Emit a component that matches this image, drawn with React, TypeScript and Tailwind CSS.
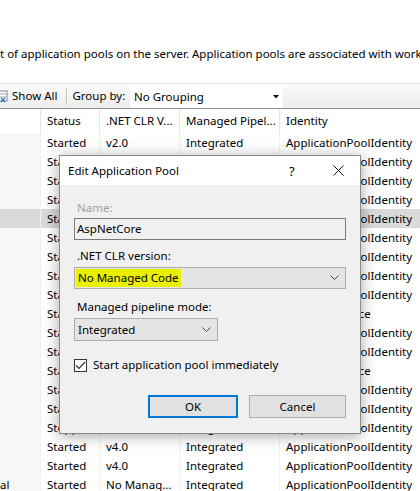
import React from "react";

type Row = { name?: string; status: string; clr: string; pipe: string; id: string };

const rows: Row[] = [
  { status: "Started", clr: "v2.0", pipe: "Integrated", id: "ApplicationPoolIdentity" },
  { status: "Started", clr: "v4.0", pipe: "Integrated", id: "ApplicationPoolIdentity" },
  { status: "Started", clr: "v4.0", pipe: "Integrated", id: "ApplicationPoolIdentity" },
  { status: "Started", clr: "v4.0", pipe: "Integrated", id: "ApplicationPoolIdentity" },
  { status: "Started", clr: "v4.0", pipe: "Integrated", id: "ApplicationPoolIdentity" },
  { status: "Started", clr: "v4.0", pipe: "Integrated", id: "ApplicationPoolIdentity" },
  { status: "Started", clr: "v4.0", pipe: "Integrated", id: "ApplicationPoolIdentity" },
  { status: "Started", clr: "v4.0", pipe: "Integrated", id: "ApplicationPoolIdentity" },
  { status: "Started", clr: "v4.0", pipe: "Integrated", id: "ApplicationPoolIdentity" },
  { status: "Started", clr: "v4.0", pipe: "Integrated", id: "NetworkService" },
  { status: "Started", clr: "v4.0", pipe: "Integrated", id: "ApplicationPoolIdentity" },
  { status: "Started", clr: "v4.0", pipe: "Integrated", id: "ApplicationPoolIdentity" },
  { status: "Started", clr: "v4.0", pipe: "Integrated", id: "NetworkService" },
  { status: "Started", clr: "v4.0", pipe: "Integrated", id: "ApplicationPoolIdentity" },
  { status: "Started", clr: "v4.0", pipe: "Integrated", id: "ApplicationPoolIdentity" },
  { status: "Stopped", clr: "v4.0", pipe: "Integrated", id: "ApplicationPoolIdentity" },
  { status: "Started", clr: "v4.0", pipe: "Integrated", id: "ApplicationPoolIdentity" },
  { status: "Started", clr: "v4.0", pipe: "Integrated", id: "ApplicationPoolIdentity" },
  { name: "al", status: "Started", clr: "No Manag...", pipe: "Integrated", id: "ApplicationPoolIdentity" },
];

function Chevron() {
  return (
    <svg width="9" height="6" viewBox="0 0 9 6" className="shrink-0">
      <path d="M0.5 0.5 L4.5 4.5 L8.5 0.5" fill="none" stroke="#444" strokeWidth="1" />
    </svg>
  );
}

export default function App() {
  return (
    <div
      className="relative w-[420px] h-[491px] overflow-hidden bg-white text-black text-[11.5px] leading-[16px]"
      style={{ fontFamily: '"Noto Sans", "Open Sans", sans-serif' }}
    >
      {/* description */}
      <div className="h-[83px] pt-[46px] whitespace-nowrap overflow-hidden">
        t of application pools on the server. Application pools are associated with worker processes
      </div>

      {/* toolbar */}
      <div className="flex h-[26px] border-t border-[#e3e3e3] border-b border-b-[#8e8f8f] bg-gradient-to-b from-[#fbfbfb] to-[#ececec]">
        <div className="flex items-center pl-0 w-[130px]">
          <svg width="10" height="13" viewBox="0 0 10 13" className="ml-[-1px]">
            <rect x="0" y="1" width="8" height="10" fill="#fff" stroke="#7f8c99" strokeWidth="1" />
            <path d="M0 4 H8 M0 7 H8" stroke="#9aa7b4" strokeWidth="1" />
            <path d="M2 8 L6 12 M6 8 L2 12" stroke="#3b6fb0" strokeWidth="1.2" />
          </svg>
          <span className="ml-[3px]">Show All</span>
          <div className="ml-[9px] w-[2px] h-[17px] border-l border-[#c9c2b2] border-r border-r-white" />
          <span className="ml-[4px]">Group by:</span>
        </div>
        <div className="w-[153px] h-[23px] mt-[1px] bg-white flex items-center pl-[4px] pr-[4px] justify-between">
          <span>No Grouping</span>
          <svg width="6" height="4" viewBox="0 0 6 4">
            <path d="M0 0 H6 L3 3.5 Z" fill="#111" />
          </svg>
        </div>
        <div className="flex-1" />
      </div>

      {/* table */}
      <div className="relative">
        <div className="flex h-[24px] items-center">
          <div className="w-[41px] h-full border-r border-[#e5e5e5]" />
          <div className="w-[59px] h-full border-r border-[#e5e5e5] pl-[6px] flex items-center">Status</div>
          <div className="w-[80px] h-full border-r border-[#e5e5e5] pl-[6px] flex items-center whitespace-nowrap">.NET CLR V...</div>
          <div className="w-[100px] h-full border-r border-[#e5e5e5] pl-[6px] flex items-center whitespace-nowrap">Managed Pipel...</div>
          <div className="flex-1 h-full pl-[6px] flex items-center">Identity</div>
        </div>
        {rows.map((r, i) => (
          <div key={i} className={`flex h-[19px] items-center whitespace-nowrap ${i === 4 ? "bg-[#d9d9d9]" : ""}`}>
            <div className={`w-[41px] h-full border-r border-[#f0f0f0] flex items-center overflow-hidden ${i === 4 ? "" : "bg-[#f7f7f7]"}`}>
              {r.name ?? ""}
            </div>
            <div className="w-[59px] h-full border-r border-[#f0f0f0] pl-[6px] flex items-center">{r.status}</div>
            <div className="w-[80px] h-full border-r border-[#f0f0f0] pl-[6px] flex items-center">{r.clr}</div>
            <div className="w-[100px] h-full border-r border-[#f0f0f0] pl-[6px] flex items-center">{r.pipe}</div>
            <div className="flex-1 h-full pl-[6px] flex items-center">{r.id}</div>
          </div>
        ))}
      </div>

      {/* dialog */}
      <div className="absolute left-[59px] top-[155px] w-[302px] h-[279px] border border-[#8a8a8a] bg-[#f0f0f0] shadow-[0_2px_14px_rgba(0,0,0,0.35)] flex flex-col">
        <div className="h-[29px] bg-white flex items-center pl-[8px] shrink-0">
          <span className="flex-1">Edit Application Pool</span>
          <span className="w-[10px] text-[13px] mr-[34px]">?</span>
          <svg width="11" height="11" viewBox="0 0 11 11" className="mr-[16px]">
            <path d="M0.5 0.5 L10.5 10.5 M10.5 0.5 L0.5 10.5" stroke="#111" strokeWidth="1" />
          </svg>
        </div>
        <div className="flex flex-col px-[14px] pt-[15px]">
          <div className="pl-[3px] text-[#a0a0a0]">Name:</div>
          <div className="mt-[2px] h-[22px] border border-[#7a7a7a] bg-[#f0f0f0] pl-[2px] flex items-center">AspNetCore</div>
          <div className="mt-[8px] pl-[3px]">.NET CLR version:</div>
          <div className="mt-[3px] h-[22px] border border-[#adadad] bg-[#e5e5e5] flex items-center pl-[1px] pr-[6px] justify-between">
            <span className="bg-[#eaf000] px-[2px] h-[18px] flex items-center">No Managed Code</span>
            <Chevron />
          </div>
          <div className="mt-[10px] pl-[3px]">Managed pipeline mode:</div>
          <div className="mt-[3px] w-[144px] h-[23px] border border-[#adadad] bg-[#e5e5e5] flex items-center pl-[3px] pr-[6px] justify-between">
            <span>Integrated</span>
            <Chevron />
          </div>
          <div className="mt-[16px] flex items-center h-[16px]">
            <div className="w-[13px] h-[13px] border border-[#333] bg-white flex items-center justify-center">
              <svg width="11" height="9" viewBox="0 0 11 9">
                <path d="M1 4.5 L4 7.5 L10 1" fill="none" stroke="#333" strokeWidth="1.2" />
              </svg>
            </div>
            <span className="ml-[6px]">Start application pool immediately</span>
          </div>
          <div className="mt-[22px] flex justify-end gap-[11px]">
            <div className="w-[90px] h-[23px] border-2 border-[#0078d7] bg-[#e1e1e1] flex items-center justify-center">OK</div>
            <div className="w-[97px] h-[23px] border border-[#adadad] bg-[#e1e1e1] flex items-center justify-center">Cancel</div>
          </div>
        </div>
      </div>
    </div>
  );
}
